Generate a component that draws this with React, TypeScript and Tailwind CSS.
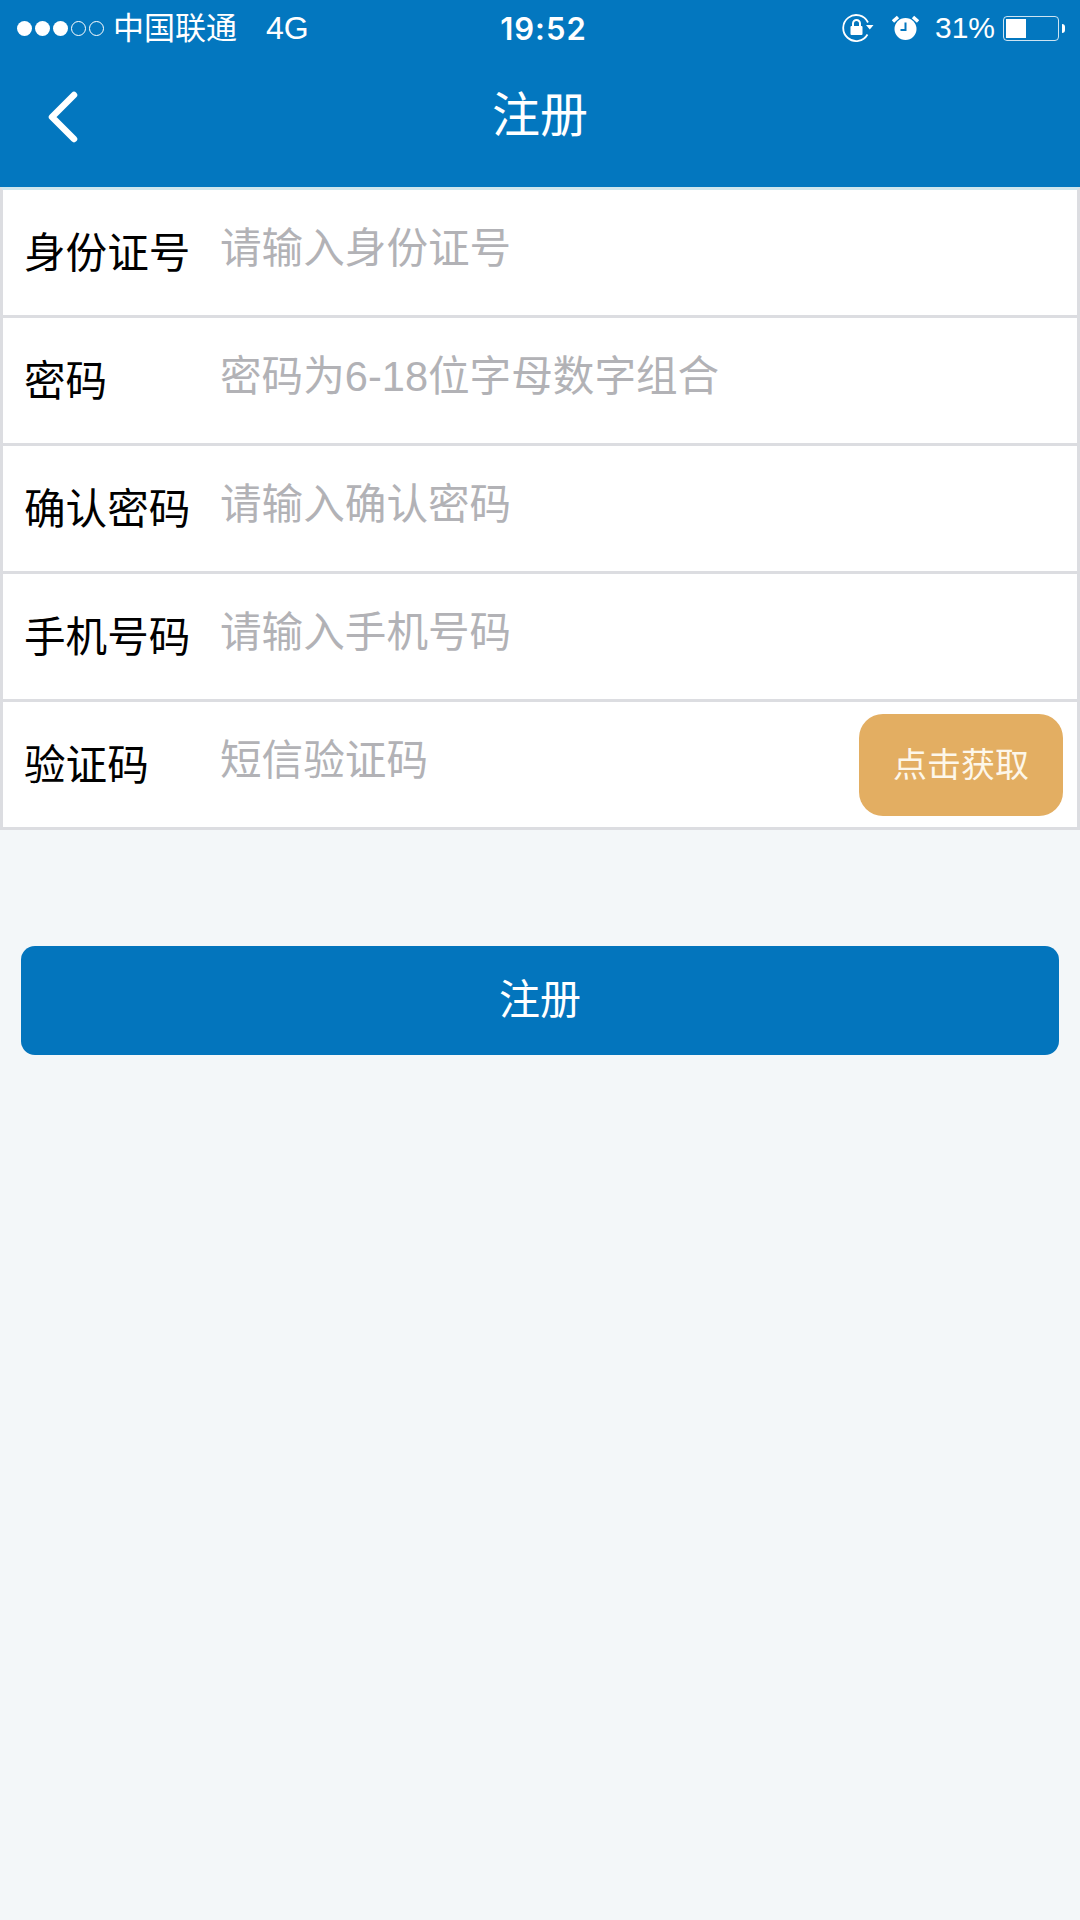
const font = "font-['Liberation_Sans','Noto_Sans_CJK_SC',sans-serif]";

const fields = [
  { label: '身份证号', placeholder: '请输入身份证号' },
  { label: '密码', placeholder: '密码为6-18位字母数字组合' },
  { label: '确认密码', placeholder: '请输入确认密码' },
  { label: '手机号码', placeholder: '请输入手机号码' },
];

function SignalDots() {
  return (
    <div className="flex items-center gap-[3px]">
      <span className="size-[15px] rounded-full bg-white" />
      <span className="size-[15px] rounded-full bg-white" />
      <span className="size-[15px] rounded-full bg-white" />
      <span className="size-[15px] rounded-full border border-white" />
      <span className="size-[15px] rounded-full border border-white" />
    </div>
  );
}

function RotationLock() {
  return (
    <svg width="32" height="30" viewBox="0 0 32 30" fill="none" stroke="white" strokeWidth="1.8">
      <path d="M25.5 21.5A13 13 0 1 1 26 9.5" />
      <path d="M24 12h7.5l-3.7 4.5z" fill="white" stroke="none" />
      <rect x="8.5" y="13" width="12" height="9" rx="1" fill="white" stroke="none" />
      <path d="M11 13v-2.5a3.5 3.5 0 0 1 7 0V13" strokeWidth="2" />
    </svg>
  );
}

function AlarmClock() {
  return (
    <svg width="27" height="26" viewBox="0 0 27 26" fill="none">
      <circle cx="13.5" cy="14" r="11" fill="white" />
      <path d="M1 6.5 6 2M26 6.5 21 2" stroke="white" strokeWidth="3.4" />
      <path d="M13.5 7.5v7.5H8.5" stroke="#0377bf" strokeWidth="2" />
    </svg>
  );
}

function Battery() {
  return (
    <div className="flex items-center gap-[3px]">
      <div className="h-[25px] w-[56px] rounded-[4px] border border-white/80 p-[2px]">
        <div className="h-full w-[20px] bg-white" />
      </div>
      <div className="h-[9px] w-[3px] rounded-r-full bg-white" />
    </div>
  );
}

function BackArrow() {
  return (
    <svg width="36" height="54" viewBox="0 0 36 54" fill="none" stroke="white" strokeWidth="6.5" strokeLinecap="round" strokeLinejoin="round" className="mt-[3px]">
      <path d="M29 6 7 28l22 22" />
    </svg>
  );
}

function Field({ label, placeholder }: { label: string; placeholder: string }) {
  return (
    <div className="flex h-[128px] items-start border-b-[3px] border-[#dcdde1]">
      <span className="mt-[39px] w-[217px] pl-[21px] text-[41.6px] leading-[50px] text-black">{label}</span>
      <span className="mt-[33px] text-[41.6px] leading-[52px] text-[#b2b2b6]">{placeholder}</span>
    </div>
  );
}

export default function App() {
  return (
    <div className={`${font} flex h-[1920px] w-[1080px] flex-col bg-[#f3f7f9]`}>
      <header className="h-[187px] bg-[#0377bf] text-white">
        <div className="grid h-[56px] grid-cols-[1fr_auto_1fr] items-center pr-[15px] pl-[17px]">
          <div className="flex items-center">
            <SignalDots />
            <span className="ml-[9px] text-[31px] leading-none">中国联通</span>
            <span className="ml-[29px] text-[32px] leading-none">4G</span>
          </div>
          <span className="pl-[5px] font-['Inter'] text-[31px] leading-none font-semibold tracking-[1px]">19:52</span>
          <div className="flex items-center justify-end">
            <RotationLock />
            <div className="ml-[18px]">
              <AlarmClock />
            </div>
            <span className="ml-[16px] text-[30px] leading-none">31%</span>
            <div className="ml-[8px]">
              <Battery />
            </div>
          </div>
        </div>
        <div className="grid h-[116px] grid-cols-[1fr_auto_1fr] items-center pl-[45px]">
          <BackArrow />
          <h1 className="mt-[3px] -ml-[45px] text-[48px] leading-none font-normal">注册</h1>
        </div>
      </header>

      <section className="border-x-[3px] border-t-[3px] border-x-[#dcdde1] border-t-[#cfe6ee] bg-white">
        {fields.map((f) => (
          <Field key={f.label} label={f.label} placeholder={f.placeholder} />
        ))}
        <div className="flex h-[128px] items-start border-b-[3px] border-[#dcdde1]">
          <span className="mt-[39px] w-[217px] pl-[21px] text-[41.6px] leading-[50px] text-black">验证码</span>
          <span className="mt-[33px] flex-1 text-[41.6px] leading-[52px] text-[#b2b2b6]">短信验证码</span>
          <button className="mt-[12px] mr-[14px] flex h-[102px] w-[204px] items-center justify-center rounded-[24px] bg-[#e3ae62] text-[34px] text-[#fdf7ea]">
            点击获取
          </button>
        </div>
      </section>

      <div className="px-[21px] pt-[116px]">
        <button className="flex h-[109px] w-full items-center justify-center rounded-[14px] bg-[#0375bd] text-[41px] text-white">
          注册
        </button>
      </div>
    </div>
  );
}
